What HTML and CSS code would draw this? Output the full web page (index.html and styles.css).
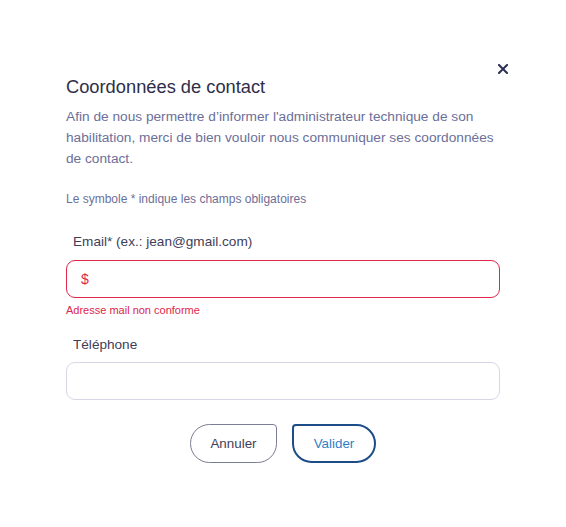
FILE: index.html
```html
<!DOCTYPE html>
<html lang="fr">
<head>
<meta charset="utf-8">
<title>Coordonnées de contact</title>
<link rel="stylesheet" href="styles.css">
</head>
<body>
<div class="dialog">
  <button class="close" aria-label="Fermer">
    <svg width="10" height="10" viewBox="0 0 10 10"><path d="M1 1 L9 9 M9 1 L1 9" stroke="#2b2f55" stroke-width="2" stroke-linecap="square"/></svg>
  </button>
  <h1 class="title">Coordonnées de contact</h1>
  <p class="intro">Afin de nous permettre d’informer l'administrateur technique de son habilitation, merci de bien vouloir nous communiquer ses coordonnées de contact.</p>
  <p class="note">Le symbole * indique les champs obligatoires</p>
  <div class="field">
    <label class="label">Email* (ex.: jean@gmail.com)</label>
    <div class="input input-error">$</div>
    <div class="error">Adresse mail non conforme</div>
  </div>
  <div class="field field-tel">
    <label class="label">Téléphone</label>
    <div class="input"></div>
  </div>
  <div class="actions">
    <button class="btn btn-cancel">Annuler</button>
    <button class="btn btn-ok">Valider</button>
  </div>
</div>
</body>
</html>
```
FILE: styles.css
```css
html, body {
  margin: 0;
  padding: 0;
  background: #ffffff;
}
body {
  font-family: "Liberation Sans", Arial, sans-serif;
}
.dialog {
  position: relative;
  width: 434px;
  padding: 75px 0 0 66px;
}
.close {
  position: absolute;
  left: 498px;
  top: 64px;
  width: 10px;
  height: 10px;
  padding: 0;
  border: 0;
  background: none;
  display: flex;
}
.title {
  margin: 0;
  font-size: 18.3px;
  line-height: 24px;
  font-weight: normal;
  color: #2e2e48;
}
.intro {
  margin: 7px 0 0;
  font-size: 13.7px;
  line-height: 21px;
  color: #6c6f99;
}
.note {
  margin: 22px 0 0;
  font-size: 12px;
  line-height: 16px;
  color: #6c6f99;
}
.field {
  margin-top: 26px;
  display: flex;
  flex-direction: column;
}
.field-tel {
  margin-top: 18px;
}
.label {
  padding-left: 7px;
  font-size: 13.6px;
  line-height: 18px;
  color: #3f4058;
}
.input {
  box-sizing: border-box;
  margin-top: 9px;
  height: 38px;
  border: 1px solid #d6d6e6;
  border-radius: 9px;
  padding: 0 14px;
  display: flex;
  align-items: center;
  font-size: 14px;
}
.field-tel .input {
  margin-top: 8px;
}
.input-error {
  border-color: #e0264a;
  color: #e0264a;
}
.error {
  margin-top: 4px;
  font-size: 11px;
  line-height: 16px;
  color: #e0264a;
}
.actions {
  margin-top: 24px;
  display: flex;
  justify-content: center;
  gap: 15px;
}
.btn {
  box-sizing: border-box;
  height: 39px;
  font-family: "Liberation Sans", Arial, sans-serif;
  font-size: 13.4px;
  background: #fff;
  padding: 0;
}
.btn-cancel {
  width: 87px;
  border: 1.5px solid #7b7d92;
  color: #3f4058;
  border-radius: 20px 4px 20px 20px;
}
.btn-ok {
  width: 84px;
  border: 2px solid #1d4d89;
  color: #2f7fc6;
  border-radius: 4px 20px 20px 20px;
}
```
